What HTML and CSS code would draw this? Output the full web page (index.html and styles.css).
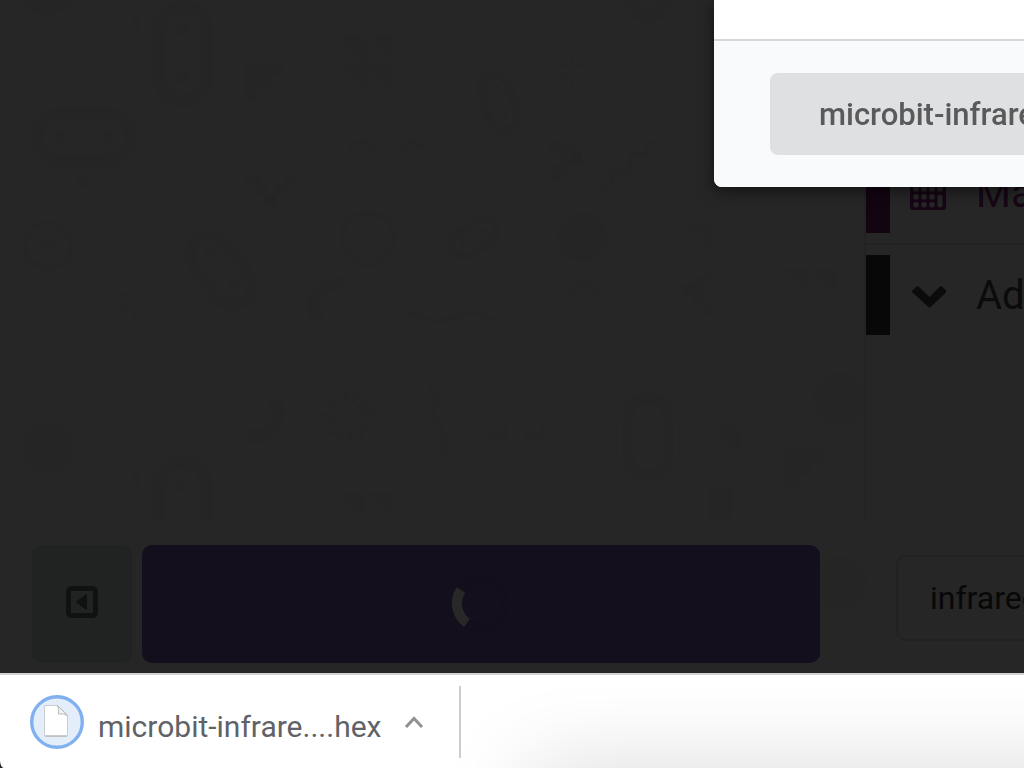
FILE: index.html
```html
<!DOCTYPE html>
<html lang="en">
<head>
  <meta charset="UTF-8">
  <title>microbit-infrared</title>
  <link rel="stylesheet" href="styles.css">
</head>
<body>

  <main class="editor">
    <!-- Background doodles -->
    <svg class="doodles" width="866" height="673" viewBox="0 0 866 673" aria-hidden="true">
      <defs>
        <g id="pill">
          <rect x="-24" y="-47" width="48" height="94" rx="24" fill="none" stroke-width="12"/>
          <circle cy="-24" r="6" stroke="none"/>
          <circle cy="24" r="6" stroke="none"/>
        </g>
        <path id="caret" d="M-15 8 0 -7 15 8" fill="none" stroke-width="4"/>
        <path id="step" d="M0 0h39v13H26v13H14v12H0z" stroke="none"/>
        <path id="star" d="M0-18V-7M0 7v11M-16-9l10 5M6 4l10 5M-16 9l10-5M6-4l10-5" fill="none" stroke-width="3"/>
        <path id="flags" d="M0 0h29v28zM30 0h27v28z" stroke="none"/>
      </defs>
      <g>
        <circle cx="48" cy="-9" r="24"/>
        <use href="#caret" x="48" y="43"/>
        <path d="M140 10l-9 13 9 12z"/>
        <use href="#pill" x="183" y="54"/>
        <use href="#step" x="244" y="63"/>
        <use href="#pill" transform="translate(84 137) rotate(90)"/>
        <circle cx="83" cy="181" r="6"/>
        <path d="M244 174h17v10h6v10h8v-10h10v-10h12v11h-11v11h-10v11h-11v-11h-11v-11h-10z"/>
        <path class="dark" d="M265 194h11v12h-11z"/>
        <circle cx="48" cy="245" r="23" class="line"/>
        <circle cx="48" cy="245" r="6"/>
        <use href="#flags" x="337" y="35"/>
        <use href="#flags" x="337" y="63"/>
        <use href="#pill" transform="translate(221 270) rotate(-36) scale(.82)"/>
        <use href="#pill" transform="translate(499 103) rotate(-16) scale(.6)"/>
        <use href="#pill" transform="translate(474 238) rotate(58) scale(.52)"/>
        <use href="#star" x="572" y="70"/>
        <use href="#star" x="134" y="301"/>
        <circle cx="648" cy="-2" r="18" class="thick"/>
        <path d="M349 151q12-18 25 0M400 151q13-18 26 0" class="line"/>
        <path d="M550 140h11v5h11v8h11v11h-11v9h-10v8h-11v-17h11v-10h-11z"/>
        <path class="dark" d="M571 151h11v11h-11z"/>
        <path d="M600 189q12 2 12-10t12-6q6-2 6-12t12-6q4 0 5-7t14-3" class="line"/>
        <circle cx="368" cy="239" r="26" class="line"/>
        <circle cx="582" cy="237" r="24"/>
        <path d="M690 223h22v24h-8v-16h-14z"/>
        <path d="M343 284q-28-2-30 20 0 9 5 17" class="thick"/>
        <use href="#caret" x="583" y="288"/>
        <path d="M405 312c16 2 18 9 32 9s22-9 36-8 14 7 27 9" class="line"/>
        <path d="M683 285h10v-9h11v-6h10v10h-10v25h10v11h-10v-10h-11v-10h-10z"/>
        <path class="dark" d="M683 285h11v10h-11z"/>
        <use href="#flags" x="780" y="268"/>
        <path d="M275 400q8 20-5 31-10 8-23 4" class="thick"/>
        <circle cx="348" cy="417" r="20" class="thick" stroke-dasharray="4 5"/>
        <path d="M435 381c-14 12 7 16 3 21s-9 16 0 19-2 16 5 18 2 11-1 15" class="line"/>
        <path d="M502 420h5v20h-21v-7h16zM540 420h5v20h-21v-7h16z"/>
        <use href="#pill" transform="translate(648 437) scale(.83)"/>
        <circle cx="840" cy="398" r="26"/>
        <use href="#step" x="785" y="449"/>
        <path d="M713 425h28v30zM708 488h25v28q-12 10-25 0z"/>
        <circle cx="48" cy="448" r="24"/>
        <use href="#caret" x="48" y="500"/>
        <path d="M140 467l-9 13 9 12z"/>
        <path d="M159 521v-35a24 24 0 0 1 48 0v35" class="thick"/>
        <circle cx="183" cy="487" r="6"/>
        <path d="M340 492h25v28zM366 492h28v28z"/>
        <circle cx="840" cy="583" r="26"/>
      </g>
    </svg>

    <section class="workspace">
      <div class="simulator"></div>
      <nav class="toolbox">
        <a href="#math" class="category math">
          <svg width="36" height="42" viewBox="0 0 36 42" aria-hidden="true">
            <path fill="currentColor" fill-rule="evenodd" d="M3 0h30q3 0 3 3v32q0 3-3 3H3q-3 0-3-3V3q0-3 3-3zM4 4v7h28V4z"/>
            <g class="keys">
              <circle cx="6" cy="16.700" r="2.800"/><circle cx="14" cy="16.700" r="2.800"/><circle cx="22" cy="16.700" r="2.800"/><circle cx="30" cy="16.700" r="2.800"/>
              <circle cx="6" cy="24.700" r="2.800"/><circle cx="14" cy="24.700" r="2.800"/><circle cx="22" cy="24.700" r="2.800"/>
              <circle cx="6" cy="32.700" r="2.800"/><circle cx="14" cy="32.700" r="2.800"/><circle cx="22" cy="32.700" r="2.800"/>
              <rect x="27.500" y="22.500" width="5" height="13" rx="2.500"/>
            </g>
          </svg>
          <span>Math</span>
        </a>
        <hr class="separator">
        <a href="#advanced" class="category advanced">
          <svg width="36" height="42" viewBox="0 0 36 42" aria-hidden="true">
            <path d="M2.500 16.500 6.500 12.500q1-1 2 0L19.500 23 30 12.500q1-1 2 0l4 4q1 1 0 2L20.500 33q-1 1-2 0L2.500 18.500q-1-1 0-2z" fill="currentColor"/>
          </svg>
          <span>Advanced</span>
        </a>
      </nav>
    </section>

    <footer class="editor-tools">
      <button class="collapse-button" aria-label="Hide the simulator">
        <svg width="32" height="36" viewBox="0 0 32 36" aria-hidden="true">
          <rect x="2.500" y="2.500" width="27" height="27" rx="3" fill="none" stroke="currentColor" stroke-width="5"/>
          <path d="M10 16 20.500 8.500v15z" fill="currentColor" stroke="currentColor" stroke-linejoin="round"/>
        </svg>
      </button>
      <button class="download-button" aria-label="Download">
        <svg width="58" height="58" viewBox="0 0 58 58" aria-hidden="true">
          <circle cx="29" cy="29" r="24" fill="none" stroke="#120e1b" stroke-width="9"/>
          <path d="M9 15A24 24 0 0 0 15 48" fill="none" stroke="#282828" stroke-width="10"/>
        </svg>
      </button>
      <input class="project-name" type="text" value="infrared" aria-label="Project name">
    </footer>
  </main>

  <!-- Download dialog -->
  <div class="modal" role="dialog" aria-label="Download">
    <div class="modal-content"></div>
    <div class="modal-actions">
      <button class="file-button">microbit-infrared.hex</button>
    </div>
  </div>

  <!-- Browser download shelf -->
  <div class="shelf">
    <button class="shelf-item">
      <svg width="54" height="54" viewBox="0 0 54 54" aria-hidden="true">
        <circle cx="27" cy="27" r="25.300" fill="#e4eefb" stroke="#80b0f0" stroke-width="3.400"/>
        <path d="M15 11h13l9 9v21H15z" fill="#c0c2c5" transform="translate(0 1)"/>
        <path d="M14.500 10.500h13L37.500 20v20.500h-23z" fill="#fff" stroke="#c9ccd0"/>
        <path d="M27.500 10.500q2 4 1 8.500 5-1 9 1.500z" fill="#f4f4f4" stroke="#b7b9bc"/>
      </svg>
      <span>microbit-infrare....hex</span>
    </button>
    <button class="shelf-menu" aria-label="More options">
      <svg width="20" height="14" viewBox="0 0 20 14" aria-hidden="true">
        <path d="M2 12 10 3.500 18 12" fill="none" stroke="#8f9194" stroke-width="3"/>
      </svg>
    </button>
  </div>

</body>
</html>
```
FILE: styles.css
```css
* {
  margin: 0;
  padding: 0;
  box-sizing: border-box;
}

body {
  display: flex;
  flex-direction: column;
  height: 100vh;
  overflow: hidden;
  font-family: Roboto, "Liberation Sans", sans-serif;
  background-color: #262626;
}

button {
  border: none;
  font-family: inherit;
  cursor: pointer;
}

.editor {
  position: relative;
  flex: 1;
  display: flex;
  flex-direction: column;
  min-height: 0;
  overflow: hidden;
}

/* sits behind the whole editor */
.doodles {
  position: absolute;
  top: 0;
  left: 0;
  fill: #252525;
  stroke: none;
}

.doodles use {
  stroke: #252525;
}

.doodles .line,
.doodles .thick {
  fill: none;
  stroke: #252525;
  stroke-width: 4px;
}

.doodles .thick {
  stroke-width: 12px;
}

.doodles .dark {
  fill: #242424;
}

.workspace {
  position: relative;
  flex: 1;
  display: flex;
  min-height: 0;
}

.simulator {
  flex: 1;
}

/* Toolbox */
.toolbox {
  width: 160px;
  padding-top: 153px;
  border-left: 2px solid #232323;
  overflow: hidden;
}

.category {
  display: flex;
  align-items: center;
  gap: 30px;
  height: 80px;
  padding-left: 20px;
  border-left: 24px solid;
  font-size: 40px;
  text-decoration: none;
  white-space: nowrap;
}

.category svg {
  flex-shrink: 0;
}

.math {
  color: #160616;
  border-color: #130412;
}

.keys {
  fill: #262626;
}

.advanced {
  color: #0b0b0b;
  border-color: #080808;
}

.separator {
  margin: 10px 0;
  border: none;
  border-top: 2px solid #222222;
}

/* Bottom tools */
.editor-tools {
  position: relative;
  display: flex;
  align-items: center;
  gap: 10px;
  height: 153px;
  padding: 14px 0 0 32px;
}

.collapse-button,
.download-button {
  display: flex;
  align-items: center;
  justify-content: center;
  height: 118px;
  border-radius: 10px;
}

.collapse-button {
  width: 100px;
  color: #101111;
  background-color: #212322;
}

.download-button {
  flex: 1;
  background-color: #140f1d;
}

.project-name {
  width: 160px;
  height: 86px;
  margin: 0 -32px 12px 66px;
  padding: 0 0 0 32px;
  border: 2px solid #222222;
  border-radius: 10px;
  font-family: inherit;
  font-size: 32px;
  color: #080808;
  background-color: #262626;
}

/* Dialog */
.modal {
  position: fixed;
  top: 0;
  right: 0;
  width: 310px;
  border-bottom-left-radius: 8px;
  background-color: white;
  box-shadow: 0 4px 16px rgba(0, 0, 0, 0.5);
  overflow: hidden;
}

.modal-content {
  height: 39px;
}

.modal-actions {
  padding: 32px 0 32px 56px;
  border-top: 2px solid #d5d7d9;
  background-color: #f9fafc;
}

.file-button {
  width: 400px;
  height: 82px;
  padding-left: 49px;
  border-radius: 8px;
  font-size: 31px;
  font-weight: 500;
  text-align: left;
  color: #5a5a5b;
  background-color: #dfe0e2;
}

/* Download shelf */
.shelf {
  position: relative;
  display: flex;
  align-items: center;
  height: 95px;
  border-top: 2px solid #d3d3d3;
  border-bottom-left-radius: 4px 8px;
  background-color: white;
  overflow: hidden;
}

/* soft shade coming up from below the shelf */
.shelf::after {
  content: "";
  position: absolute;
  top: 105%;
  left: 530px;
  right: -100px;
  height: 60px;
  box-shadow: 0 0 90px rgba(0, 0, 0, 0.18);
}

.shelf-item {
  display: flex;
  align-items: center;
  gap: 14px;
  padding-left: 30px;
  font-size: 30px;
  color: #5f6368;
  background: none;
}

.shelf-item span {
  padding-top: 10px;
}

.shelf-menu {
  display: flex;
  align-items: center;
  height: 72px;
  padding: 0 35px 0 23px;
  border-right: 2px solid #cccccc;
  background: none;
}
```
